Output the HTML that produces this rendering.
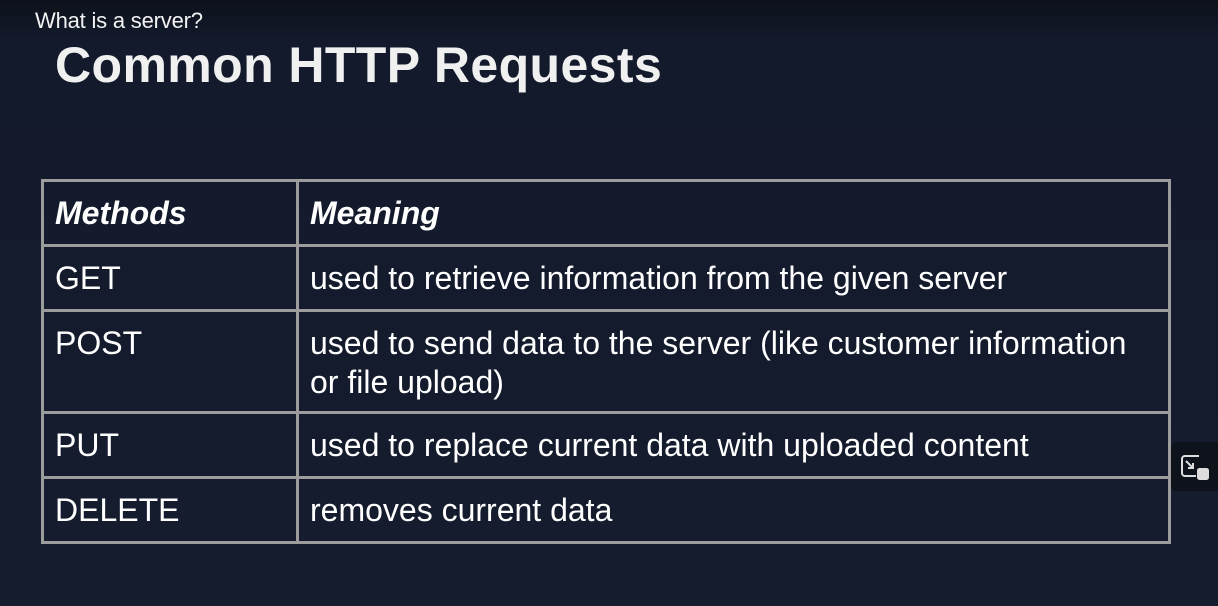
<!DOCTYPE html>
<html><head><style>
body{margin:0;width:1218px;height:606px;overflow:hidden;background:linear-gradient(#0c111b 0px,#131a2b 40px,#151c2e 100%);font-family:"Liberation Sans",sans-serif;color:#fff;position:relative}
.sub{position:absolute;left:35px;top:8px;font-size:22px;color:#f2f2f2;letter-spacing:-0.2px}
h1{position:absolute;left:55px;top:36px;margin:0;font-size:50px;font-weight:bold;color:#f0f0f0;letter-spacing:0.4px}
table{position:absolute;left:41px;top:179px;width:1130px;border-collapse:collapse;border:3px solid #9c9c9c;table-layout:fixed}
td{border:3px solid #9c9c9c;padding:0 0 0 11px;font-size:32px;color:#fff;vertical-align:top}
td:first-child{width:241px}
td div{height:62px;line-height:62px;overflow:hidden;white-space:nowrap}
.h td{font-weight:bold;font-style:italic}
.r2 td div{height:87px;padding-top:12px;line-height:39px}
.btn{position:absolute;left:1171px;top:442px;width:50px;height:49px;background:#0e121b;border-radius:6px}
</style></head><body>
<div class="sub">What is a server?</div>
<h1>Common HTTP Requests</h1>
<table>
<tr class="h"><td><div>Methods</div></td><td><div>Meaning</div></td></tr>
<tr><td><div>GET</div></td><td><div>used to retrieve information from the given server</div></td></tr>
<tr class="r2"><td><div>POST</div></td><td><div>used to send data to the server (like customer information<br>or file upload)</div></td></tr>
<tr><td><div>PUT</div></td><td><div>used to replace current data with uploaded content</div></td></tr>
<tr><td><div>DELETE</div></td><td><div>removes current data</div></td></tr>
</table>
<div class="btn"><svg width="50" height="49" viewBox="0 0 50 49"><path d="M28 14H14a3 3 0 0 0-3 3v14a3 3 0 0 0 3 3h11" fill="none" stroke="#ddd" stroke-width="2"/><path d="M15 19l7 7M22 21v5h-5" fill="none" stroke="#ddd" stroke-width="2"/><rect x="26" y="26" width="12" height="12" rx="2.5" fill="#ddd"/></svg></div>
</body></html>
